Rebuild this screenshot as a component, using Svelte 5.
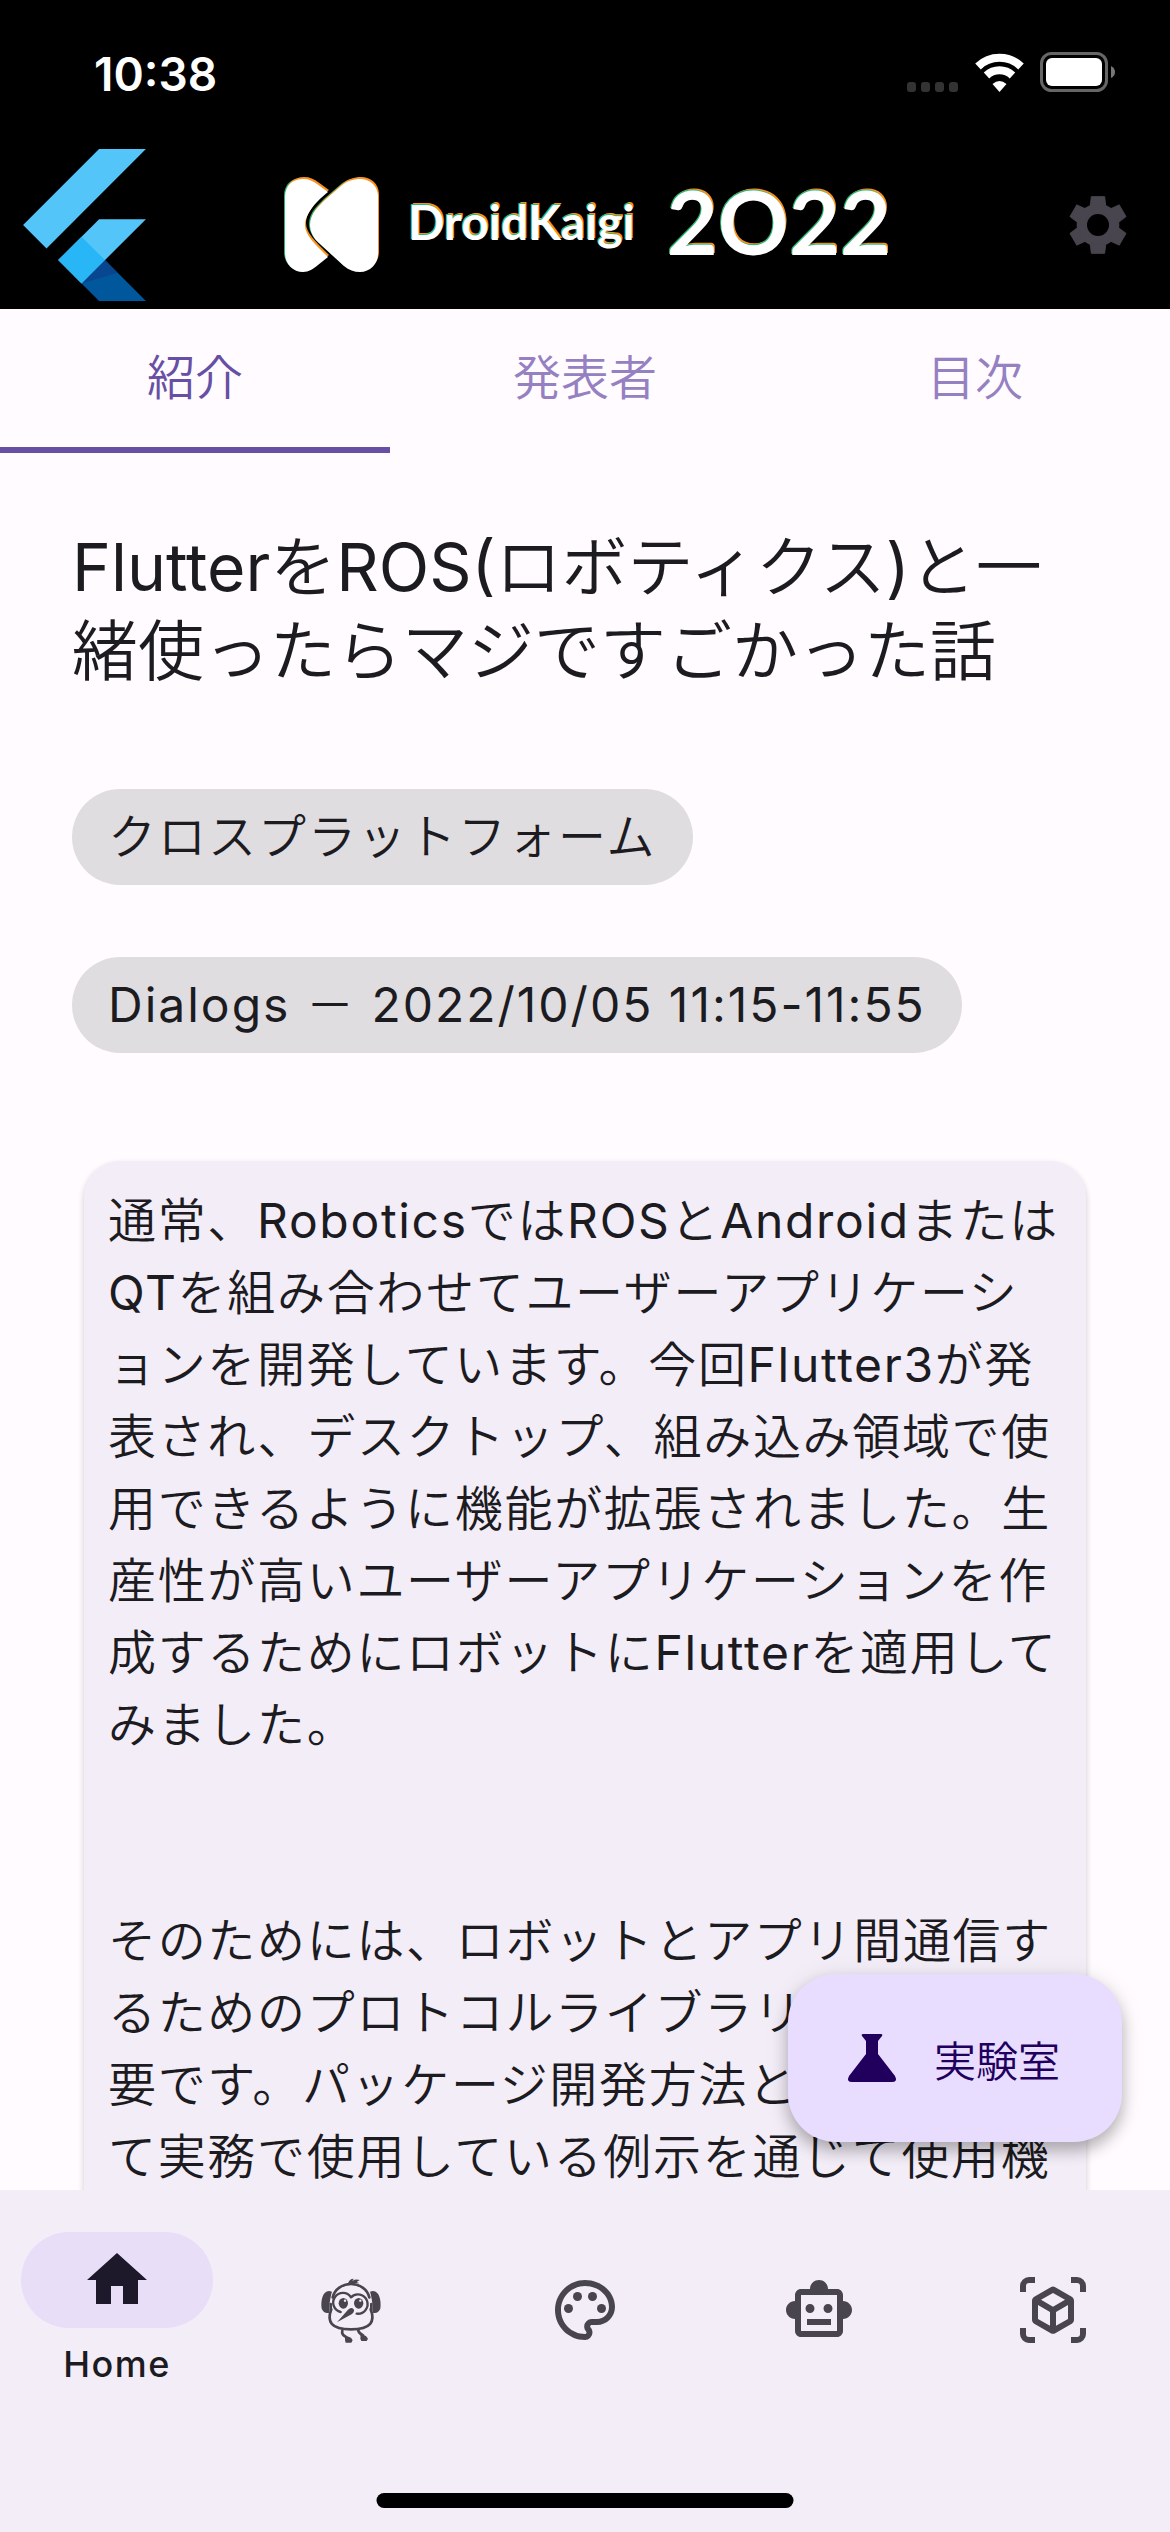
<script lang="ts">
  const tabs = ['紹介', '発表者', '目次'];
  let activeTab = $state(0);
  let activeNav = $state(0);
  const nav = ['Home', 'Dash', 'Palette', 'Robot', 'AR'];
  const teeth = [0, 60, 120, 180, 240, 300];
</script>

<div class="screen">
  <header>
    <div class="status">
      <time>10:38</time>
      <div class="indicators">
        <svg width="52" height="10" viewBox="0 0 52 10" fill="#333"><rect width="9" height="10" rx="3" /><rect x="14" width="9" height="10" rx="3" /><rect x="28" width="9" height="10" rx="3" /><rect x="42" width="9" height="10" rx="3" /></svg>
        <svg class="wifi" width="49" height="40" viewBox="0 0 49 40" fill="none" stroke="#fff" stroke-width="8"><path d="M3 14.500a31 31 0 0 1 43 0" /><path d="M11.500 23.500a19 19 0 0 1 26 0" /><path d="M24.500 40l-7-8q7-6 14 0z" fill="#fff" stroke="none" /></svg>
        <svg width="76" height="40" viewBox="0 0 76 40"><rect x="1.500" y="1.500" width="65" height="37" rx="10" fill="none" stroke="#666" stroke-width="3" /><rect x="6" y="6" width="56" height="28" rx="6" fill="#fff" /><path d="M71 14q4 2 4 6t-4 6z" fill="#777" /></svg>
      </div>
    </div>
    <div class="appbar">
      <svg class="flutter" width="123" height="152" viewBox="9.8 10.4 146.4 181.2" role="img" aria-label="Flutter">
        <path fill="#54c5f8" d="M37.700 128.900 9.800 101 100.400 10.400h55.800zM156.200 94h-55.800l-48.800 48.800 27.900 27.900z" />
        <path fill="#01579b" d="m79.500 170.700 20.900 20.900h55.800l-48.800-48.800z" />
        <path fill="#0c3f8c" d="m79.500 170.700 27.900-27.900 15 15z" opacity=".7" />
        <path fill="#29b6f6" d="m51.600 142.800 27.900-27.900 27.900 27.900-27.900 27.900z" />
      </svg>
      <div class="brand">
        <svg width="96" height="96" viewBox="0 0 96 96">
          <defs>
            <path id="mark" d="M1 20C1 8 9 2 19 2C25 2 29 4 33 7L44 15C34 23 21 36 21 48C21 58 30 66 44 80L34 88C29 92 25 95 19 95C9 95 1 87 1 76zM26 48C26 36 36 28 42 22L57 9C63 4 69 2 76 2C86 2 94 9 94 19V77C94 87 86 95 76 95C70 95 65 93 60 89L36 67C30 62 26 55 26 48z" />
          </defs>
          <use href="#mark" x="-1" y="-1" fill="#2bb673" /><use href="#mark" x="1" y="-2" fill="#f7931e" /><use href="#mark" fill="#fff" />
        </svg>
        <span class="name">DroidKaigi</span>
        <span class="year">2O22</span>
      </div>
      <button class="gear" aria-label="設定">
        <svg width="72" height="72" viewBox="-108 -108 216 216" fill="#49454f">
          <circle r="64" />
          {#each teeth as angle}
            <path d="M-23-58-20-85H20L23-58z" stroke="#49454f" stroke-width="3" stroke-linejoin="round" transform={`rotate(${angle})`} />
          {/each}
          <circle r="33" fill="#000" />
        </svg>
      </button>
    </div>
  </header>

  <div class="tabs" role="tablist">
    {#each tabs as tab, i}
      <button role="tab" aria-selected={activeTab === i} class:active={activeTab === i} onclick={() => (activeTab = i)}>{tab}</button>
    {/each}
  </div>

  <div class="stage">
    <main>
      <h1>FlutterをROS(ロボティクス)と一緒使ったらマジですごかった話</h1>
      <span class="chip">クロスプラットフォーム</span>
      <span class="chip">Dialogs － 2022/10/05 11:15-11:55</span>
      <article>
        <p>通常、RoboticsではROSとAndroidまたはQTを組み合わせてユーザーアプリケーションを開発しています。今回Flutter3が発表され、デスクトップ、組み込み領域で使用できるように機能が拡張されました。生産性が高いユーザーアプリケーションを作成するためにロボットにFlutterを適用してみました。</p>
        <p>そのためには、ロボットとアプリ間通信するためのプロトコルライブラリの開発が必要です。パッケージ開発方法とそれを使って実務で使用している例示を通じて使用機</p>
      </article>
    </main>
    <button class="fab">
      <svg width="72" height="72" viewBox="0 0 72 72" fill="#21005d"><path d="M27 12H45q2 0 1 2L42 19V32L59 54q3 6-3 6H16q-6 0-3-6L30 32V19L26 14q-1-2 1-2z" /></svg>
      <span>実験室</span>
    </button>
  </div>

  <nav>
    {#each nav as item, i}
      <button class="dest" class:current={activeNav === i} aria-label={item} onclick={() => (activeNav = i)}>
        <span class="pill">
          {#if i === 0}
            <svg viewBox="0 0 24 24"><path d="M10 20v-6h4v6h5v-8h3L12 3 2 12h3v8z" /></svg>
          {:else if i === 1}
            <svg viewBox="45 42 216 216">
              <g fill="none" stroke="#49454f" stroke-width="8" stroke-linecap="round" stroke-linejoin="round">
                <path d="M98 112C104 87 127 72 153 72s49 15 55 40" />
                <path d="M94 148C80 184 92 208 153 208s73-24 59-60" />
                <path d="M92 132V150M214 132V150" />
                <path d="M122 156A29 29 0 1 1 153 112A29 29 0 1 1 170 161" stroke-width="7" />
                <path d="M127 212q-3 12 10 18M174 210q4 12 15 16" />
              </g>
              <path d="M96 95C70 84 61 120 65 146Q72 162 88 158C86 142 91 110 96 95zM210 95c26-11 35 25 31 51q-7 16-23 12c2-16-3-48-8-63z" />
              <ellipse cx="130" cy="130" rx="14" ry="16" /><ellipse cx="176" cy="130" rx="14" ry="16" />
              <circle cx="135" cy="122" r="3.500" fill="#f3edf7" /><circle cx="181" cy="122" r="3.500" fill="#f3edf7" />
              <path d="M111 187l33-38q10-9 17-1 4 7-5 14zM144 70q4-14 17-14l-4 7q10-7 22-3l-9 6 8 4z" />
              <path d="M135 226l18 7 5 8-4 7h-17l-2-8zM182 222l16 6 6 8-4 7h-16l-3-7z" />
            </svg>
          {:else if i === 2}
            <svg viewBox="0 0 24 24"><path d="M12 22C6.490 22 2 17.510 2 12S6.490 2 12 2s10 4.040 10 9c0 3.310-2.690 6-6 6h-1.770c-.28 0-.5.22-.5.5 0 .12.05.23.13.33.41.47.64 1.060.64 1.670A2.500 2.500 0 0 1 12 22zm0-18c-4.410 0-8 3.590-8 8s3.590 8 8 8c.28 0 .5-.22.5-.5a.54.54 0 0 0-.14-.35c-.41-.46-.63-1.050-.63-1.650a2.500 2.500 0 0 1 2.500-2.500H16c2.210 0 4-1.790 4-4 0-3.860-3.590-7-8-7z" /><circle cx="6.500" cy="11.500" r="1.500" /><circle cx="9.500" cy="7.500" r="1.500" /><circle cx="14.500" cy="7.500" r="1.500" /><circle cx="17.500" cy="11.500" r="1.500" /></svg>
          {:else if i === 3}
            <svg viewBox="0 0 24 24"><path d="M20 9V7c0-1.100-.9-2-2-2h-3c0-1.660-1.340-3-3-3S9 3.340 9 5H6c-1.100 0-2 .9-2 2v2c-1.660 0-3 1.340-3 3s1.340 3 3 3v4c0 1.100.9 2 2 2h12c1.100 0 2-.9 2-2v-4c1.660 0 3-1.340 3-3s-1.340-3-3-3zm-2 10H6V7h12v12zm-9-6c-.83 0-1.500-.67-1.500-1.500S8.170 10 9 10s1.500.67 1.500 1.500S9.830 13 9 13zm7.500-1.500c0 .83-.67 1.500-1.500 1.500s-1.500-.67-1.500-1.500.67-1.500 1.500-1.500 1.500.67 1.500 1.500zM8 15h8v2H8v-2z" /></svg>
          {:else}
            <svg viewBox="0 0 24 24"><path d="M2 6V4a2 2 0 0 1 2-2h2M18 2h2a2 2 0 0 1 2 2v2M22 18v2a2 2 0 0 1-2 2h-2M6 22H4a2 2 0 0 1-2-2v-2" fill="none" stroke="#49454f" stroke-width="2" /><path d="M18.250 7.600l-5.500-3.180a1.500 1.500 0 0 0-1.500 0L5.750 7.600c-.46.27-.75.76-.75 1.300v6.350c0 .54.29 1.030.75 1.300l5.500 3.180c.46.27 1.040.27 1.500 0l5.500-3.180c.46-.27.75-.76.75-1.300V8.900c0-.54-.29-1.030-.75-1.300zM7 14.960v-4.620l4 2.320v4.610l-4-2.310zm5-4.030L8 8.610l4-2.310 4 2.310-4 2.320zm1 6.340v-4.610l4-2.320v4.620l-4 2.310z" /></svg>
          {/if}
        </span>
        {#if activeNav === i}<span class="label">{item}</span>{/if}
      </button>
    {/each}
    <div class="homebar"></div>
  </nav>
</div>

<style>
  :global(body) {
    margin: 0;
    background: #fffbff;
  }
  .screen {
    display: flex;
    flex-direction: column;
    height: 100vh;
    font-family: Inter, 'Noto Sans CJK JP DemiLight', 'Noto Sans CJK JP', sans-serif;
    font-weight: 400;
    font-optical-sizing: none;
    color: #1c1b1f;
    background: #fffbff;
  }
  button {
    border: 0;
    padding: 0;
    background: none;
    font: inherit;
    color: inherit;
    cursor: pointer;
  }
  svg {
    display: block;
    flex: none;
  }
  header {
    background: #000;
    color: #fff;
  }
  .status {
    display: flex;
    justify-content: space-between;
    align-items: flex-end;
    height: 141px;
    padding: 0 54px 49px 94px;
    box-sizing: border-box;
  }
  time {
    font-size: 46px;
    font-weight: 600;
    line-height: 36px;
  }
  .indicators {
    display: flex;
    align-items: flex-end;
  }
  .wifi {
    margin: 0 16px;
  }
  .appbar {
    display: grid;
    grid-template-columns: 1fr auto 1fr;
    align-items: center;
    height: 168px;
    padding: 0 36px 0 23px;
  }
  .gear {
    justify-self: end;
  }
  .brand {
    display: flex;
    align-items: center;
    margin-left: 18px;
    font-family: Lato, sans-serif;
    font-weight: 700;
    text-shadow: -1px -1px 0 #2bb673, 1px -2px 0 #f7931e;
  }
  .name,
  .year {
    padding-bottom: 8px;
  }
  .name {
    margin-left: 28px;
    font-size: 48px;
  }
  .year {
    margin-left: 32px;
    font-size: 88px;
    line-height: 96px;
  }
  .tabs {
    display: grid;
    grid-template-columns: repeat(3, 1fr);
    height: 144px;
    flex: none;
  }
  .tabs button {
    font-size: 48px;
    line-height: 72px;
    color: #9581c1;
    border-bottom: 6px solid transparent;
  }
  .tabs .active {
    color: #6750a4;
    border-color: #6750a4;
  }
  .stage {
    position: relative;
    flex: 1;
    min-height: 0;
  }
  main {
    display: flex;
    flex-direction: column;
    align-items: flex-start;
    height: 100%;
    box-sizing: border-box;
    overflow: hidden;
    padding: 72px 72px 0;
  }
  h1 {
    margin: 0 0 96px;
    font-size: 66px;
    font-weight: 400;
    line-height: 84px;
  }
  .chip {
    flex: none;
    margin-bottom: 72px;
    padding: 0 36px;
    border-radius: 48px;
    background: #dfdde0;
    font-size: 48px;
    line-height: 96px;
    letter-spacing: 2px;
  }
  article {
    flex: none;
    margin: 36px 12px 0;
    padding: 24px;
    border-radius: 36px;
    background: #f3edf7;
    box-shadow: 0 3px 6px rgb(0 0 0 / 20%);
    font-size: 48px;
    line-height: 72px;
    letter-spacing: 0.035em;
  }
  p {
    margin: 0 0 144px;
  }
  .fab {
    position: absolute;
    right: 48px;
    bottom: 48px;
    display: flex;
    align-items: center;
    gap: 26px;
    height: 168px;
    padding: 0 62px 0 48px;
    border-radius: 48px;
    background: #e8ddff;
    color: #21005d;
    font-size: 42px;
    box-shadow: 0 9px 15px rgb(0 0 0 / 24%), 0 3px 24px rgb(0 0 0 / 10%);
  }
  nav {
    position: relative;
    display: grid;
    grid-template-columns: repeat(5, 1fr);
    flex: none;
    height: 342px;
    background: #f3edf7;
  }
  .dest {
    display: flex;
    flex-direction: column;
    align-items: center;
    justify-content: center;
    height: 240px;
  }
  .pill {
    display: grid;
    place-items: center;
    width: 192px;
    height: 96px;
    border-radius: 48px;
  }
  .pill svg {
    width: 72px;
    height: 72px;
    fill: #49454f;
  }
  .current .pill {
    background: #e8def8;
  }
  .current .pill svg {
    fill: #1d192b;
  }
  .label {
    margin-top: 12px;
    font-size: 36px;
    font-weight: 500;
    line-height: 48px;
    letter-spacing: 0.04em;
  }
  .homebar {
    position: absolute;
    bottom: 24px;
    left: 50%;
    width: 417px;
    height: 15px;
    border-radius: 8px;
    background: #000;
    transform: translateX(-50%);
  }
</style>
